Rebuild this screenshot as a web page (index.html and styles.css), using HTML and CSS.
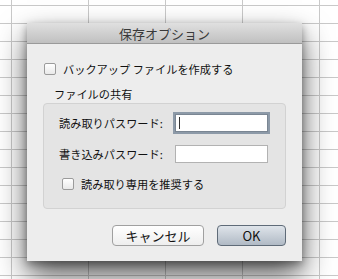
FILE: index.html
```html
<!doctype html>
<html>
<head>
  <meta charset="utf-8">
  <link rel="stylesheet" href="styles.css">
</head>
<body>
  <div class="sheet">
    <div class="titlebar">保存オプション</div>
    <div class="content">
      <label class="check-row">
        <span class="checkbox"></span>バックアップ ファイルを作成する
      </label>
      <div class="section-label">ファイルの共有</div>
      <div class="group">
        <div class="field-row">
          <span class="field-label">読み取りパスワード:</span>
          <span class="field focused"><span class="caret"></span></span>
        </div>
        <div class="field-row second">
          <span class="field-label">書き込みパスワード:</span>
          <span class="field"></span>
        </div>
        <label class="check-row inner">
          <span class="checkbox"></span>読み取り専用を推奨する
        </label>
      </div>
      <div class="buttons">
        <div class="btn cancel">キャンセル</div>
        <div class="btn default">OK</div>
      </div>
    </div>
  </div>
</body>
</html>
```

FILE: styles.css
```css
html, body {
  width: 100%;
  height: 100%;
  margin: 0;
  padding: 0;
  overflow: hidden;
}
body {
  background-color: #fff;
  background-image:
    linear-gradient(to right, #c9c9c9 1px, transparent 1px),
    linear-gradient(to bottom, #c9c9c9 1px, transparent 1px);
  background-size: 77px 18px;
  background-position: 11px 5px;
  font-family: "Noto Sans CJK JP", "Noto Sans", sans-serif;
  font-size: 11.2px;
  color: #111;
}
/* the sheet floats over the spreadsheet grid */
.sheet {
  position: absolute;
  top: 23px;
  left: 27px;
  width: 275px;
  height: 238px;
  background: #ededed;
  box-shadow: 0 14px 28px rgba(0,0,0,0.65), 0 3px 8px rgba(0,0,0,0.35);
}
.titlebar {
  height: 20px;
  line-height: 21px;
  text-align: center;
  font-size: 13px;
  color: #3a3a3a;
  background: linear-gradient(to bottom, #e0e0e0, #c0c0c0);
  border-bottom: 1px solid #9a9a9a;
}
.content {
  padding: 17px 16px 0 16px;
}
.check-row {
  display: flex;
  align-items: center;
  height: 16px;
  line-height: 16px;
  white-space: nowrap;
}
.checkbox {
  width: 10px;
  height: 10px;
  margin: 0 7px 0 1px;
  border: 1px solid #9b9b9b;
  border-radius: 2px;
  background: linear-gradient(to bottom, #fff, #e9e9e9);
}
.section-label {
  margin: 9px 0 0 11px;
  height: 16px;
  line-height: 16px;
}
.group {
  margin-top: 1px;
  padding: 10px 17px 16px 15px;
  background: #e4e4e4;
  border: 1px solid #d2d2d2;
  border-radius: 4px;
}
.field-row {
  display: flex;
  align-items: center;
  justify-content: space-between;
  height: 18px;
}
.field-row.second {
  margin-top: 13px;
}
.field {
  width: 91px;
  height: 16px;
  border: 1px solid #b2b2b2;
  background: #fff;
  display: flex;
  align-items: center;
}
.field.focused {
  border-color: #7a8693;
  box-shadow: 0 0 0 2px #8d9aa8;
}
.caret {
  width: 1px;
  height: 12px;
  margin-left: 3px;
  background: #333;
}
.check-row.inner {
  margin-top: 13px;
  margin-left: 2px;
}
.buttons {
  display: flex;
  justify-content: flex-end;
  gap: 13px;
  margin-top: 16px;
}
.btn {
  height: 19px;
  line-height: 19px;
  text-align: center;
  font-size: 13px;
  border-radius: 4px;
  color: #111;
}
.btn.cancel {
  width: 90px;
  border: 1px solid #a0a0a0;
  background: linear-gradient(to bottom, #ffffff, #eeeeee);
}
.btn.default {
  width: 67px;
  border: 1px solid #5f6b78;
  background: linear-gradient(to bottom, #dfe4ea, #b0bac5);
}
```
